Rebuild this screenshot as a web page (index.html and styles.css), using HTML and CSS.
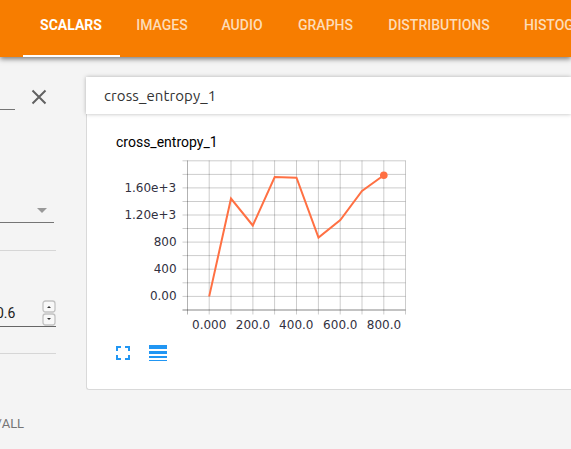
FILE: index.html
```
<!DOCTYPE html>
<html lang="en">
<head>
<meta charset="utf-8">
<title>TensorBoard</title>
<link rel="stylesheet" href="styles.css">
</head>
<body>
<header class="toolbar">
  <div class="tab active">SCALARS</div>
  <div class="tab">IMAGES</div>
  <div class="tab">AUDIO</div>
  <div class="tab">GRAPHS</div>
  <div class="tab">DISTRIBUTIONS</div>
  <div class="tab last">HISTOGRAMS</div>
</header>
<main class="layout">
  <aside class="sidebar">
    <div class="search">
      <div class="search-line"></div>
      <svg class="close" width="16" height="16" viewBox="0 0 16 16"><path d="M1.5 1.5L14.5 14.5M14.5 1.5L1.5 14.5"/></svg>
    </div>
    <div class="dropdown"><svg width="10" height="5" viewBox="0 0 10 5"><path d="M0 0H10L5 5Z"/></svg></div>
    <div class="smoothing">
      <div class="number">
        <span class="value">0.6</span>
        <svg class="spinner" width="14" height="26" viewBox="0 0 14 26">
          <rect x="1" y="1" width="12" height="11" rx="2.5"/><rect x="1" y="14" width="12" height="11" rx="2.5"/>
          <path d="M5 8L7 6L9 8ZM5 18L7 20L9 18Z"/>
        </svg>
      </div>
    </div>
    <div class="toggle">/ALL</div>
  </aside>
  <section class="content">
    <h2 class="heading"><span>cross_entropy_1</span></h2>
    <div class="card">
      <h3 class="title">cross_entropy_1</h3>
      <svg class="chart" width="310" height="180" viewBox="110 155 310 180">
        <path class="grid" d="M182.5 160.8H405.5M182.5 174.4H405.5M182.5 187.9H405.5M182.5 201.5H405.5M182.5 215H405.5M182.5 228.5H405.5M182.5 242.1H405.5M182.5 255.6H405.5M182.5 269.2H405.5M182.5 282.8H405.5M182.5 296.4H405.5M182.5 310H405.5"/>
        <path class="grid" d="M209.2 160.5V314.5M231 160.5V314.5M252.9 160.5V314.5M274.6 160.5V314.5M296.5 160.5V314.5M318.4 160.5V314.5M340.2 160.5V314.5M362 160.5V314.5M383.8 160.5V314.5M405.5 160.5V314.5"/>
        <path class="axis" d="M187.5 160.5V314.5M182.5 310H405.5"/>
        <g class="labels y">
          <text x="176.2" y="192">1.60e+3</text><text x="176.2" y="219">1.20e+3</text><text x="176.6" y="246">800</text><text x="176.6" y="273">400</text><text x="176.6" y="300">0.00</text>
        </g>
        <g class="labels x">
          <text x="209.2" y="329">0.000</text><text x="253" y="329">200.0</text><text x="296.3" y="329">400.0</text><text x="340.3" y="329">600.0</text><text x="384" y="329">800.0</text>
        </g>
        <path class="series" d="M209.2 296.4L231 198.5L252.8 225.5L274.7 177L296.5 177.7L318.5 237.5L340.3 220L362 191L383.8 175.3"/>
        <circle class="point" cx="383.8" cy="175.3" r="3.8"/>
      </svg>
      <div class="actions">
        <svg width="14" height="14" viewBox="0 0 14 14"><path d="M0 0H5V2H2V5H0ZM9 0H14V5H12V2H9ZM0 9H2V12H5V14H0ZM12 9H14V14H9V12H12Z"/></svg>
        <svg width="18" height="16" viewBox="0 0 18 16"><path d="M0 0H18V4H0ZM0 6H18V9H0ZM0 11H18V13H0ZM0 15H18V16H0Z"/></svg>
      </div>
    </div>
  </section>
</main>
</body>
</html>
```
FILE: styles.css
```
* { box-sizing: border-box; }
body {
  margin: 0;
  width: 571px;
  height: 449px;
  overflow: hidden;
  background: #f4f4f4;
  font-family: Roboto, "Liberation Sans", sans-serif;
}
.toolbar {
  position: relative;
  height: 57px;
  padding-left: 23px;
  display: grid;
  grid-template-columns: 97px 84px 76px 91px 136px 64px;
  background: #f77d00;
  box-shadow: 0 2px 5px rgba(0, 0, 0, .5);
}
.tab {
  height: 57px;
  padding-top: 1px;
  line-height: 48px;
  text-align: center;
  white-space: nowrap;
  font-size: 14px;
  font-weight: 500;
  color: #fddcb8;
}
.tab.active {
  padding-right: 1px;
  color: #fff;
  font-weight: 700;
  border-bottom: 2px solid #fff;
}
.tab.last { text-align: left; padding-left: 17px; overflow: hidden; }
.layout { display: flex; height: 392px; }
.sidebar { width: 86px; overflow: hidden; }
.search {
  height: 53px;
  display: flex;
}
.search-line {
  width: 15px;
  border-bottom: 1px solid #757575;
}
.close { margin: 32px 0 0 16px; }
.close path { fill: none; stroke: #616161; stroke-width: 2; }
.dropdown {
  width: 54px;
  height: 113px;
  padding: 98px 7px 0 0;
  display: flex;
  justify-content: flex-end;
  border-bottom: 1px solid #757575;
}
.dropdown path { fill: #999; }
.smoothing {
  width: 56px;
  height: 104px;
  margin-top: 27px;
  padding-top: 49px;
  border-top: 1px solid #d6d6d6;
  border-bottom: 1px solid #d6d6d6;
}
.number {
  height: 27px;
  display: flex;
  justify-content: space-between;
  border-bottom: 1px solid #666;
}
.value {
  margin-left: -4px;
  line-height: 27px;
  font-size: 14px;
  color: #212121;
}
.spinner rect { fill: #f8f8f8; stroke: #c2c2c2; stroke-width: 1.3; }
.spinner path { fill: #333; }
.toggle {
  width: 24px;
  margin-top: 61px;
  display: flex;
  justify-content: flex-end;
  white-space: nowrap;
  line-height: 17px;
  font-size: 13px;
  letter-spacing: -.1px;
  color: #757575;
}
.content { flex: 1; padding-top: 20px; }
.heading {
  position: relative;
  height: 37px;
  margin: 0;
  padding-left: 18px;
  background: #fff;
  box-shadow: 0 0 4px rgba(0, 0, 0, .28);
  font: 400 15px/38px Ubuntu, "Noto Sans", sans-serif;
  letter-spacing: .1px;
  color: #333;
}
.card {
  height: 276px;
  padding: 19px 0 0 29px;
  border: 1px solid #d9d9d9;
  border-top: 0;
  border-right: 0;
  border-radius: 0 0 0 3px;
  background: #fff;
}
.title {
  height: 22px;
  margin: 0;
  font-size: 14px;
  font-weight: 400;
  line-height: 18px;
  color: #000;
}
.chart { display: block; margin-left: -6px; }
.grid, .axis { fill: none; stroke: rgba(0, 0, 0, .2); stroke-width: 1; }
.axis { stroke: rgba(0, 0, 0, .3); }
.labels { font-family: "DejaVu Sans", sans-serif; font-size: 12px; fill: #32313f; }
.labels.y { text-anchor: end; }
.labels.x { text-anchor: middle; }
.series { fill: none; stroke: #ff7043; stroke-width: 2; }
.point { fill: #ff7043; }
.actions { display: flex; align-items: center; gap: 19px; margin-top: 10px; }
.actions path { fill: #2196f3; }
```
